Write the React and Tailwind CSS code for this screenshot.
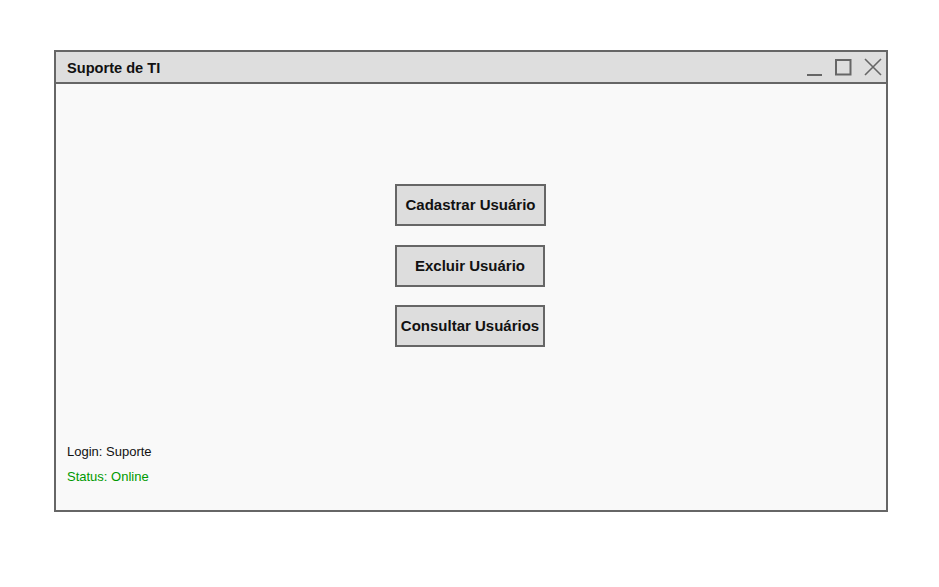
import React from 'react';

function WindowControls() {
    return (
        <div className="flex items-center gap-[12px] text-[#666666]">
            <svg width="16" height="20" viewBox="0 0 16 20" className="mt-[1px] ml-[2px]">
                <path d="M0 17 H15" stroke="currentColor" strokeWidth="2" fill="none" />
            </svg>
            <svg width="17" height="17" viewBox="0 0 17 17">
                <rect x="1" y="1" width="14.5" height="14.5" stroke="currentColor" strokeWidth="2" fill="none" />
            </svg>
            <svg width="18" height="18" viewBox="0 0 18 18">
                <path d="M1 1 L17 17 M17 1 L1 17" stroke="currentColor" strokeWidth="1.6" fill="none" />
            </svg>
        </div>
    );
}

function MenuButton({ label, wide }) {
    return (
        <button
            className={`${wide ? 'w-[151px]' : 'w-[150px]'} h-[42px] bg-[#dddddd] border-2 border-[#666666] text-[15px] font-bold text-[#111111] flex items-center justify-center pt-[1px]`}
        >
            {label}
        </button>
    );
}

export default function App() {
    return (
        <div className="min-h-screen bg-white pt-[50px] pl-[54px] font-['Liberation_Sans',Arial,sans-serif]">
            <div className="w-[834px] h-[462px] border-2 border-[#666666] bg-[#f9f9f9] flex flex-col">
                <div className="h-[32px] bg-[#dedede] border-b-2 border-[#666666] flex items-center justify-between pl-[11px] pr-[4px] shrink-0">
                    <span className="text-[14.6px] font-bold text-[#111111] mt-[3px]">Suporte de TI</span>
                    <WindowControls />
                </div>
                <div className="flex-1 flex flex-col">
                    <div className="flex flex-col items-center gap-[19px] mt-[100px] pr-[1px]">
                        <MenuButton label="Cadastrar Usuário" wide />
                        <div className="flex flex-col items-center gap-[18px] pr-[1px]">
                            <MenuButton label="Excluir Usuário" />
                            <MenuButton label="Consultar Usuários" />
                        </div>
                    </div>
                    <div className="mt-auto mb-[26px] pl-[11px] flex flex-col gap-[10px] text-[13px] leading-[15px]">
                        <span className="text-[#111111]">Login: Suporte</span>
                        <span className="text-[#009900]">Status: Online</span>
                    </div>
                </div>
            </div>
        </div>
    );
}
